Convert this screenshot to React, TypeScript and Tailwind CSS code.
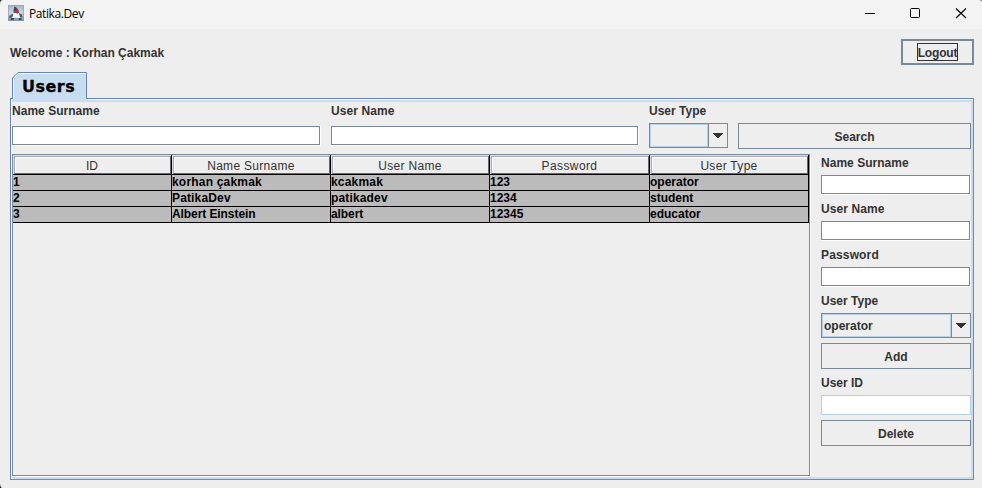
import React from "react";

const FONT = "font-['Liberation_Sans',Arial,sans-serif]";

function Label({ children, className = "" }: { children: React.ReactNode; className?: string }) {
  return (
    <div className={`h-[16px] whitespace-nowrap text-[12px] font-bold leading-[16px] text-[#333333] ${className}`}>
      {children}
    </div>
  );
}

/* Etched text field: grey frame with a white highlight on the bottom and right. */
function Field({ className = "" }: { className?: string }) {
  return (
    <div className={`h-[20px] border-b border-r border-white ${className}`}>
      <div className="h-full w-full border border-[#7a8a99] bg-white" />
    </div>
  );
}

function Button({ children, className = "" }: { children: React.ReactNode; className?: string }) {
  return (
    <button
      className={`flex h-[26px] items-center justify-center border border-[#7a8a99] bg-[#eeeeee] pt-[2px] text-[12px] font-bold leading-[16px] text-[#333333] ${className}`}
    >
      {children}
    </button>
  );
}

function Combo({ value, className = "" }: { value: string; className?: string }) {
  return (
    <div className={`flex h-[25px] border border-[#7a8a99] ${className}`}>
      <div className="flex-1 border border-[#b8cfe5] pl-px text-[12px] font-bold leading-[22px] text-[#333333]">
        {value}
      </div>
      <div className="flex w-[19px] items-center justify-center border-l border-[#7a8a99]">
        <svg width="10" height="5" viewBox="0 0 10 5" shapeRendering="crispEdges">
          <path d="M0 0h10v1H0zM1 1h8v1H1zM2 2h6v1H2zM3 3h4v1H3zM4 4h2v1H4z" fill="#333333" />
        </svg>
      </div>
    </div>
  );
}

const headers = [
  { text: "ID", width: "w-[159px]", spacing: "" },
  { text: "Name Surname", width: "w-[159px]", spacing: "tracking-[0.3px]" },
  { text: "User Name", width: "w-[159px]", spacing: "tracking-[0.3px]" },
  { text: "Password", width: "w-[160px]", spacing: "tracking-[0.4px]" },
  { text: "User Type", width: "w-[159px]", spacing: "tracking-[0.3px]" },
];

const rows = [
  { cells: ["1", "korhan çakmak", "kcakmak", "123", "operator"], spacing: "tracking-[0.2px]" },
  { cells: ["2", "PatikaDev", "patikadev", "1234", "student"], spacing: "tracking-[0.15px]" },
  { cells: ["3", "Albert Einstein", "albert", "12345", "educator"], spacing: "tracking-[-0.08px]" },
];

function Table() {
  return (
    <div className="h-[323px] w-[799px] border-b border-r border-white">
      <div className="h-full w-full border border-[#7a8a99]">
        <div className="flex h-[19px] w-[796px]">
          {headers.map((h) => (
            <div key={h.text} className={`border-r border-black ${h.width}`}>
              <div className="h-full border-l border-t border-[#dcdce8]">
                <div className="h-full border border-b-[#66666f] border-l-[#a9a9c0] border-r-[#66666f] border-t-[#a9a9c0]">
                  <div className={`h-full border-l border-t border-white pr-[2px] text-center text-[12px] leading-[16px] text-[#333333] ${h.spacing}`}>
                    {h.text}
                  </div>
                </div>
              </div>
            </div>
          ))}
        </div>
        <div className="w-[796px] border-t border-black">
          {rows.map((row) => (
            <div key={row.cells[0]} className="flex h-[16px] border-b border-black bg-[#bbbbbb]">
              {row.cells.map((cell, i) => (
                <div
                  key={i}
                  className={`whitespace-nowrap border-r border-black text-[12px] font-bold leading-[14px] text-black ${headers[i].width} ${i === 1 || i === 2 ? row.spacing : ""}`}
                >
                  {cell}
                </div>
              ))}
            </div>
          ))}
        </div>
      </div>
    </div>
  );
}

function TitleBar() {
  return (
    <header className="flex h-[29px] items-center bg-[#f3f3f3] pl-2">
      <svg width="16" height="16" viewBox="0 0 16 16" className="-mt-[3px]">
        <defs>
          <linearGradient id="tile" x1="0" y1="0" x2="0" y2="1">
            <stop offset="0" stopColor="#a3b5c6" />
            <stop offset="0.5" stopColor="#cdd8e2" />
            <stop offset="1" stopColor="#7d93aa" />
          </linearGradient>
        </defs>
        <rect width="16" height="16" fill="url(#tile)" />
        <rect x="0.5" y="0.5" width="15" height="15" fill="none" stroke="#8a9cae" strokeOpacity="0.6" />
        <path d="M7 4L10 6L11.500 9L12 13.500L8 12.500L4.500 13.500L4.500 9Z" fill="#f6f6f6" />
        <path d="M6.500 1.500C8.500 2 10.500 4 11 7.500L9.500 8.500L7 7.500L5.500 8.500C5.500 5.500 5.800 3 6.500 1.500Z" fill="#41484f" />
        <path d="M5 8.500L1.500 11L1 13L3.500 12.500L5 11Z" fill="#555d66" />
        <path d="M11 8L14 9.500L14.500 12.500L12 12Z" fill="#555d66" />
        <path d="M3 13H6.500L5.500 15H2.500ZM10.500 13H13.500V15H11Z" fill="#41464d" />
        <circle cx="8.700" cy="6.300" r="1.900" fill="#dc2525" />
      </svg>
      <span className="-mt-[2px] ml-[5px] flex-1 whitespace-nowrap font-['Open_Sans','Noto_Sans',sans-serif] text-[12px] leading-[16px] tracking-[-0.4px] text-black">
        Patika.Dev
      </span>
      <svg width="120" height="29" viewBox="862 0 120 29" fill="none" stroke="#000000">
        <path d="M865 13.500h10" />
        <rect x="910.500" y="8.500" width="9" height="9" rx="1" />
        <path d="M956 8.500l10 9.500M966 8.500l-10 9.500" strokeWidth="1.100" />
      </svg>
    </header>
  );
}

export default function App() {
  return (
    <div className={`relative h-[488px] w-[982px] overflow-hidden bg-[#eeeeee] ${FONT}`}>
      <TitleBar />
      <svg className="absolute left-0 top-0" width="4" height="4" viewBox="0 0 4 4">
        <path d="M0 0H3Q0 0 0 4Z" fill="#333333" />
      </svg>
      <svg className="absolute right-0 top-0" width="3" height="3" viewBox="0 0 3 3">
        <path d="M0 0H3V3Q3 0 0 0Z" fill="#777777" />
      </svg>
      <svg className="absolute bottom-0 left-0" width="3" height="5" viewBox="0 0 3 5">
        <path d="M0 0V5H2Q0 4 0 0Z" fill="#222222" />
      </svg>

      <div className="flex h-[43px] justify-between pl-[10px] pr-[8px] pt-[10px]">
        <Label className="mt-[6px] tracking-[-0.02px]">Welcome : Korhan Çakmak</Label>
        <button className="flex h-[26px] w-[73px] items-center justify-center border-2 border-[#7a8a99] text-[12px] font-bold text-[#333333]">
          <span className="flex h-[18px] w-[41px] items-center justify-center border border-[#333333] pt-[2px] leading-[16px] tracking-[-0.15px]">
            Logout
          </span>
        </button>
      </div>

      <div className="ml-[12px] h-[26px] w-[75px]">
        <div className="relative z-10 h-[30px] w-[75px]">
          <svg className="absolute left-0 top-0" width="75" height="30" viewBox="0 0 75 30">
            <path d="M1 30V6L6 1H74V30Z" fill="#c8ddf2" />
            <path d="M1.500 27V6.500L6.500 1.500H74" fill="none" stroke="#ffffff" />
            <path d="M0.500 26V6L6 0.500H74.500V26.500" fill="none" stroke="#6382bf" />
          </svg>
          <div className="relative pl-[10px] pt-[5px] font-['DejaVu_Sans',Verdana,sans-serif] text-[16px] font-bold leading-[20px] tracking-[0.5px] text-black [-webkit-text-stroke:0.3px_black]">
            Users
          </div>
        </div>
      </div>

      <main className="ml-[10px] h-[382px] w-[964px] border border-b-[#7a8a99] border-l-[#6382bf] border-r-[#7a8a99] border-t-[#6382bf]">
        <div className="h-full border-l border-t border-white">
          <div className="h-full border-b-2 border-r-2 border-t-2 border-[#c8ddf2]">
            <div className="flex h-[52px] pt-px">
              <div className="w-[319px]">
                <Label className="tracking-[0.03px]">Name Surname</Label>
                <Field className="mt-[7px] w-[309px]" />
              </div>
              <div className="w-[318px]">
                <Label className="tracking-[0.08px]">User Name</Label>
                <Field className="mt-[7px] w-[308px]" />
              </div>
              <div className="w-[89px]">
                <Label>User Type</Label>
                <Combo value="" className="mt-[4px] w-[79px]" />
              </div>
              <Button className="mt-[20px] w-[233px]">Search</Button>
            </div>
            <div className="flex">
              <Table />
              <div className="ml-[10px] w-[150px] pt-px">
                <Label className="tracking-[0.03px]">Name Surname</Label>
                <Field className="mt-[4px]" />
                <Label className="mt-[6px] tracking-[0.08px]">User Name</Label>
                <Field className="mt-[4px]" />
                <Label className="mt-[6px] tracking-[0.15px]">Password</Label>
                <Field className="mt-[4px]" />
                <Label className="mt-[6px]">User Type</Label>
                <Combo value="operator" className="mt-[4px]" />
                <Button className="mt-[5px] w-full">Add</Button>
                <Label className="mt-[6px]">User ID</Label>
                <div className="mt-[4px] h-[20px] border border-[#b8cfe5] bg-white" />
                <Button className="mt-[5px] w-full">Delete</Button>
              </div>
            </div>
          </div>
        </div>
      </main>
    </div>
  );
}
